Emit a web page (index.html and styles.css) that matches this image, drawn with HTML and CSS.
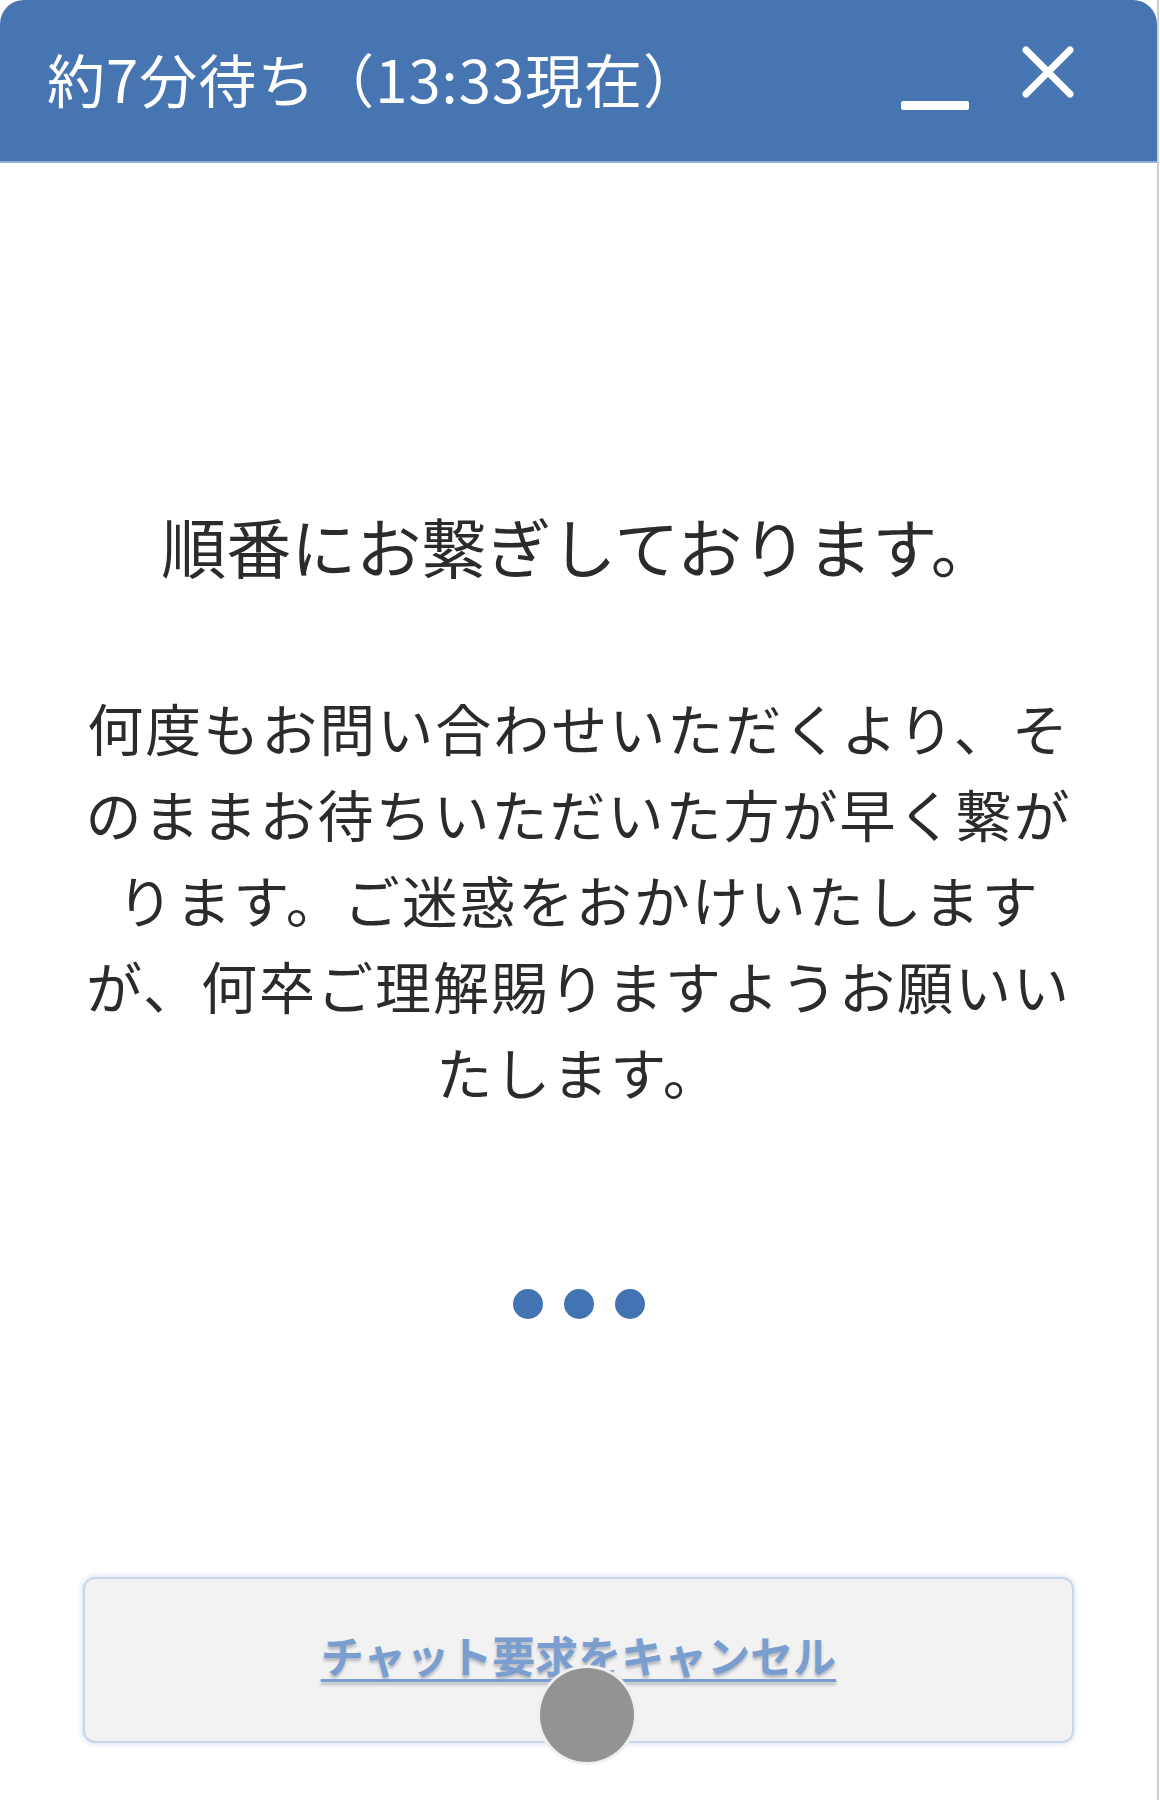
FILE: index.html
```html
<!DOCTYPE html>
<html lang="ja">
<head>
<meta charset="utf-8">
<link rel="stylesheet" href="styles.css">
</head>
<body>
<div class="panel">
  <header class="header">
    <div class="title">約7分待ち（13:33現在）</div>
    <div class="controls">
      <span class="minimize" aria-label="最小化"></span>
      <svg class="close" width="54" height="54" viewBox="0 0 54 54" aria-label="閉じる">
        <path d="M5 5 L49 49 M49 5 L5 49" stroke="#fff" stroke-width="7" stroke-linecap="round" fill="none"/>
      </svg>
    </div>
  </header>
  <main class="content">
    <h1 class="heading">順番にお繋ぎしております。</h1>
    <p class="message">
      <span class="line">何度もお問い合わせいただくより、そ</span>
      <span class="line">のままお待ちいただいた方が早く繋が</span>
      <span class="line">ります。ご迷惑をおかけいたします</span>
      <span class="line">が、何卒ご理解賜りますようお願いい</span>
      <span class="line">たします。</span>
    </p>
    <div class="dots">
      <span class="dot"></span><span class="dot"></span><span class="dot"></span>
    </div>
    <div class="button-wrap">
      <button class="cancel"><span class="cancel-text">チャット要求をキャンセル</span></button>
      <span class="touch"></span>
    </div>
  </main>
</div>
</body>
</html>
```

FILE: styles.css
```css
html, body {
  margin: 0;
  padding: 0;
  background: #ffffff;
}
body {
  width: 1160px;
  height: 1800px;
  overflow: hidden;
  font-family: "Noto Sans CJK JP", "Noto Sans", sans-serif;
  color: #333333;
}
.panel {
  width: 1157px;
  height: 1800px;
  border-right: 2px solid #cfcfcf;
  background: #ffffff;
  display: flex;
  flex-direction: column;
}
.header {
  height: 163px;
  flex: none;
  background: #4675b2;
  border-radius: 24px 24px 0 0;
  display: flex;
  align-items: center;
  justify-content: space-between;
  padding: 0 82px 0 47px;
  box-sizing: border-box;
  border-bottom: 2px solid #8fb0d8;
}
.title {
  color: #ffffff;
  font-size: 58px;
  line-height: 1;
  margin-top: -6px;
  letter-spacing: 1px;
}
.controls {
  display: flex;
  align-items: flex-start;
  gap: 52px;
}
.minimize {
  display: block;
  width: 68px;
  height: 9px;
  background: #ffffff;
  border-radius: 2px;
  margin-top: 50px;
}
.close {
  display: block;
  margin-top: -6px;
}
.content {
  flex: 1;
  display: flex;
  flex-direction: column;
  align-items: center;
  padding-top: 337px;
}
.heading {
  margin: 0;
  font-weight: 400;
  font-size: 65px;
  line-height: 90px;
  color: #2b2b2b;
  letter-spacing: 0;
}
.message {
  margin: 94px 0 0;
  font-size: 56px;
  line-height: 86px;
  letter-spacing: 2px;
  text-align: center;
  color: #2b2b2b;
}
.line {
  display: block;
  white-space: nowrap;
}
.dots {
  margin-top: 175px;
  display: flex;
  gap: 21px;
}
.dot {
  width: 30px;
  height: 30px;
  border-radius: 50%;
  background: #4473b3;
}
.button-wrap {
  position: relative;
  margin-top: 258px;
  width: 991px;
}
.cancel {
  width: 991px;
  height: 166px;
  background: #f2f2f2;
  border: 2px solid #c8d7ec;
  border-radius: 12px;
  box-shadow: 0 0 6px rgba(140, 170, 215, 0.45);
  display: flex;
  align-items: center;
  justify-content: center;
  padding: 0 0 12px;
  font-family: inherit;
}
.cancel-text {
  font-size: 43px;
  font-weight: 700;
  color: #7a9ecf;
  text-decoration: underline;
  text-decoration-thickness: 3px;
  text-underline-offset: 6px;
  text-shadow: 0 3px 3px rgba(70, 80, 100, 0.35);
  letter-spacing: 0;
}
.touch {
  position: absolute;
  left: 454px;
  top: 88px;
  width: 94px;
  height: 94px;
  border-radius: 50%;
  background: #939393;
  border: 3px solid rgba(255, 255, 255, 0.85);
}
```
